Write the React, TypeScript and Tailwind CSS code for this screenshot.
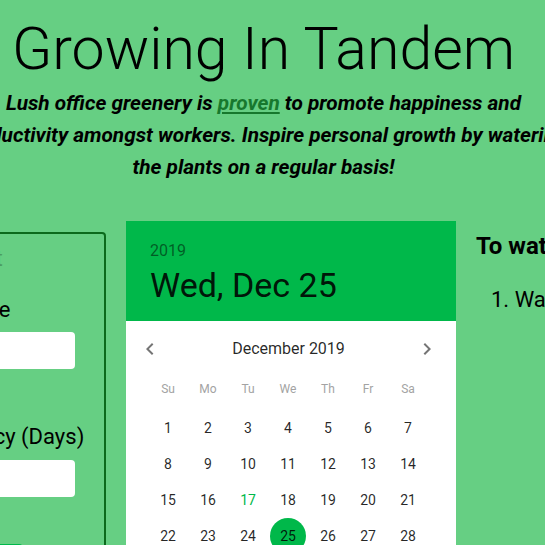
import React from "react";

const ChevronLeft = () => (
  <svg width="24" height="24" viewBox="0 0 24 24" className="fill-[#757575]">
    <path d="M15.41 7.41L14 6l-6 6 6 6 1.41-1.41L10.83 12z" />
  </svg>
);

const ChevronRight = () => (
  <svg width="24" height="24" viewBox="0 0 24 24" className="fill-[#757575]">
    <path d="M10 6L8.59 7.41 13.17 12l-4.58 4.59L10 18l6-6z" />
  </svg>
);

const weekdays = ["Su", "Mo", "Tu", "We", "Th", "Fr", "Sa"];
const days = Array.from({ length: 31 }, (_, i) => i + 1);

export default function App() {
  return (
    <div className="w-[545px] h-[545px] overflow-hidden bg-[#66cf83] flex justify-center pr-[18px] [font-family:Roboto,'Liberation_Sans',sans-serif] text-black">
      <div className="w-[1000px] shrink-0 flex flex-col items-center">
        <h1 className="pt-[14px] text-[59px] leading-[70px] font-light">Growing In Tandem</h1>
        <p className="mt-[3px] w-[630px] text-center italic font-bold text-[20.8px] leading-[32px]">
          Lush office greenery is{" "}
          <a className="text-[#17782d] underline">proven</a> to promote happiness and
          <br />
          productivity amongst workers. Inspire personal growth by watering the plants on a
          regular basis!
        </p>
        <div className="mt-[10px] w-full h-[2px] bg-[#0f6e22]" />

        <div className="mt-[28px] flex items-start gap-[20px]">
          {/* Left form panel */}
          <div className="mt-[11px] w-[306px] border-2 border-[#0b6a1c] rounded-[4px] pt-[12px] pb-[20px] flex flex-col items-center text-center">
            <div className="text-[22px] leading-[26px] text-black/25">New Plant</div>
            <div className="mt-[25px] text-[22px] leading-[26px]">Plant Name</div>
            <div className="mt-[9px] w-[244px] h-[37px] bg-white rounded-[4px]" />
            <div className="mt-[55px] text-[22px] leading-[26px]">Watering Frequency (Days)</div>
            <div className="mt-[10px] w-[244px] h-[37px] bg-white rounded-[4px]" />
            <div className="mt-[47px] w-[140px] h-[40px] bg-[#00b84a] rounded-[4px] text-white text-[16px] flex items-center justify-center">
              Add Plant
            </div>
          </div>

          {/* Calendar */}
          <div className="w-[330px] bg-white">
            <div className="h-[100px] bg-[#00b84a] pl-[24px] pt-[18px]">
              <div className="text-[16px] leading-[24px] text-black/50">2019</div>
              <div className="mt-[2px] text-[34px] leading-[40px] text-black/90">Wed, Dec 25</div>
            </div>
            <div className="pt-[4px] pb-[20px]">
              <div className="h-[48px] flex items-center justify-between pl-[12px] pr-[17px]">
                <ChevronLeft />
                <span className="text-[16px] text-black/85">December 2019</span>
                <ChevronRight />
              </div>
              <div className="mt-[6px] ml-[22px] h-[20px] grid grid-cols-[repeat(7,40px)] items-center">
                {weekdays.map((d) => (
                  <div key={d} className="text-center text-[12px] text-[#a3a3a3]">
                    {d}
                  </div>
                ))}
              </div>
              <div className="mt-[11px] ml-[22px] grid grid-cols-[repeat(7,40px)] auto-rows-[36px]">
                {days.map((d) => (
                  <div key={d} className="flex items-center justify-center">
                    {d === 25 ? (
                      <div className="w-[36px] h-[36px] rounded-full bg-[#00b84a] flex items-center justify-center text-[14px] text-black/85">
                        {d}
                      </div>
                    ) : (
                      <span
                        className={
                          d === 17 ? "text-[14px] text-[#00b84a]" : "text-[14px] text-black/85"
                        }
                      >
                        {d}
                      </span>
                    )}
                  </div>
                ))}
              </div>
            </div>
          </div>

          {/* Right instructions */}
          <div className="mt-[11px] w-[251px] whitespace-nowrap">
            <h3 className="text-[24px] leading-[28px] font-bold">To water the plants:</h3>
            <ol className="mt-[27px] list-decimal list-inside pl-[15px] text-[22px] leading-[26px]">
              <li>Water the plant that is due next.</li>
            </ol>
          </div>
        </div>
      </div>
    </div>
  );
}
